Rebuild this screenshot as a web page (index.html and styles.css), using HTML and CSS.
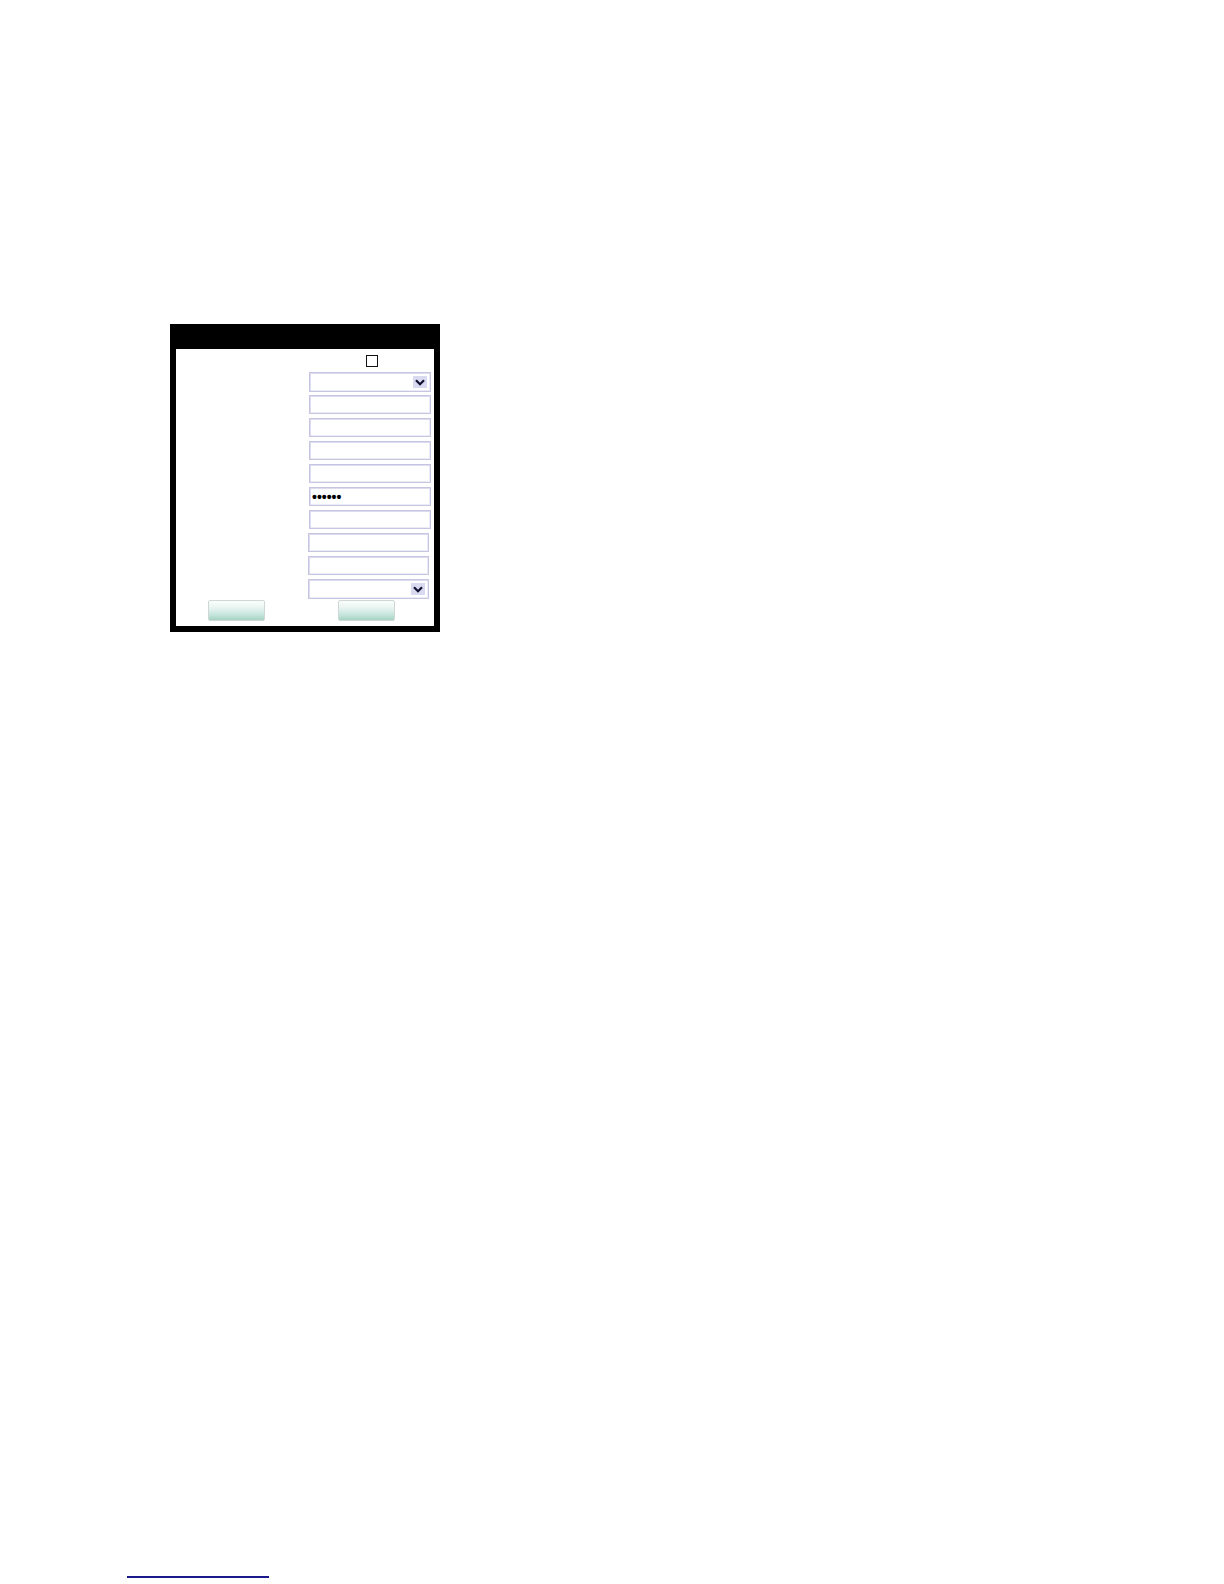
FILE: index.html
```html
<!DOCTYPE html>
<html lang="en">
<head>
<meta charset="utf-8">
<title>Form</title>
<link rel="stylesheet" href="styles.css">
</head>
<body>
<div class="page">
  <div class="dialog">
    <div class="titlebar"></div>
    <div class="panel">
      <div class="row row-check">
        <span class="label"></span>
        <span class="field field-center"><input class="check" type="checkbox"></span>
      </div>
      <div class="row">
        <span class="label"></span>
        <span class="field"><span class="select"><span class="arrow"><svg width="10" height="7" viewBox="0 0 10 7"><path d="M1 1.2 L5 5.2 L9 1.2" fill="none" stroke="#111133" stroke-width="2.2"/></svg></span></span></span>
      </div>
      <div class="row"><span class="label"></span><span class="field"><input class="text" type="text"></span></div>
      <div class="row"><span class="label"></span><span class="field"><input class="text" type="text"></span></div>
      <div class="row"><span class="label"></span><span class="field"><input class="text" type="text"></span></div>
      <div class="row"><span class="label"></span><span class="field"><input class="text" type="text"></span></div>
      <div class="row"><span class="label"></span><span class="field"><input class="text pwd" type="password" value="123456"></span></div>
      <div class="row"><span class="label"></span><span class="field"><input class="text" type="text"></span></div>
      <div class="row"><span class="label"></span><span class="field field-shift"><input class="text" type="text"></span></div>
      <div class="row"><span class="label"></span><span class="field field-shift"><input class="text" type="text"></span></div>
      <div class="row row-last">
        <span class="label"></span>
        <span class="field field-shift"><span class="select"><span class="arrow"><svg width="10" height="7" viewBox="0 0 10 7"><path d="M1 1.2 L5 5.2 L9 1.2" fill="none" stroke="#111133" stroke-width="2.2"/></svg></span></span></span>
      </div>
      <div class="buttons">
        <button class="btn" type="button"></button>
        <button class="btn" type="button"></button>
      </div>
    </div>
  </div>
  <div class="footer"><a class="footer-link" href="#">&nbsp;</a></div>
</div>
</body>
</html>
```

FILE: styles.css
```css
html, body {
  margin: 0;
  padding: 0;
  background: #ffffff;
  font-family: "Liberation Sans", Arial, sans-serif;
}

.page {
  height: 1584px;
  padding-top: 324px;
  box-sizing: border-box;
}

.dialog {
  width: 270px;
  margin-left: 170px;
  background: #000000;
  padding: 0 6px 6px 6px;
  box-sizing: border-box;
}

.titlebar {
  height: 25px;
}

.panel {
  background: #ffffff;
  height: 277px;
  box-sizing: border-box;
}

.row {
  display: flex;
  height: 23px;
  align-items: flex-start;
}

.row-check {
  align-items: center;
}

.row-last {
  height: 21px;
}

.label {
  width: 133px;
  flex: none;
}

.field {
  width: 122px;
  flex: none;
  display: flex;
}

.field-center {
  justify-content: center;
  padding-left: 4px;
  box-sizing: border-box;
}

.field-shift {
  margin-left: -1px;
  width: 121px;
}

.check {
  appearance: none;
  -webkit-appearance: none;
  margin: 0;
  width: 12px;
  height: 12px;
  border: 1.5px solid #111111;
  background: #ffffff;
  box-sizing: border-box;
}

.text,
.select {
  width: 100%;
  height: 19px;
  margin: 0;
  padding: 0 3px;
  box-sizing: border-box;
  border: 1px solid #c6c6e2;
  box-shadow: inset 1px 1px 0 #dcdcee, inset -1px -1px 0 #ececf6;
  background: #ffffff;
  outline: none;
  font-family: "Liberation Sans", Arial, sans-serif;
}

.select {
  height: 20px;
  display: flex;
  align-items: center;
  justify-content: flex-end;
  padding: 0 3px 0 0;
}

.arrow {
  width: 14px;
  height: 12px;
  background: #d9d9ef;
  display: flex;
  align-items: center;
  justify-content: center;
}

.pwd {
  font-size: 14px;
  font-weight: bold;
  letter-spacing: 0;
  color: #000000;
  padding-left: 2px;
}

.buttons {
  display: flex;
  padding: 0 0 0 32px;
  gap: 73px;
}

.btn {
  width: 57px;
  height: 21px;
  margin: 0;
  padding: 0;
  border: 1px solid #cfd8d6;
  border-radius: 2px;
  background: linear-gradient(#fafdfc 0%, #e9f4f1 35%, #c8e6dd 70%, #a5d3c4 100%);
}

.footer {
  margin-top: 927px;
  padding-left: 127px;
}

.footer-link {
  display: inline-block;
  width: 142px;
  height: 10px;
  border-bottom: 2px solid #1a1a8c;
  text-decoration: none;
  font-size: 8px;
  line-height: 10px;
}
```
